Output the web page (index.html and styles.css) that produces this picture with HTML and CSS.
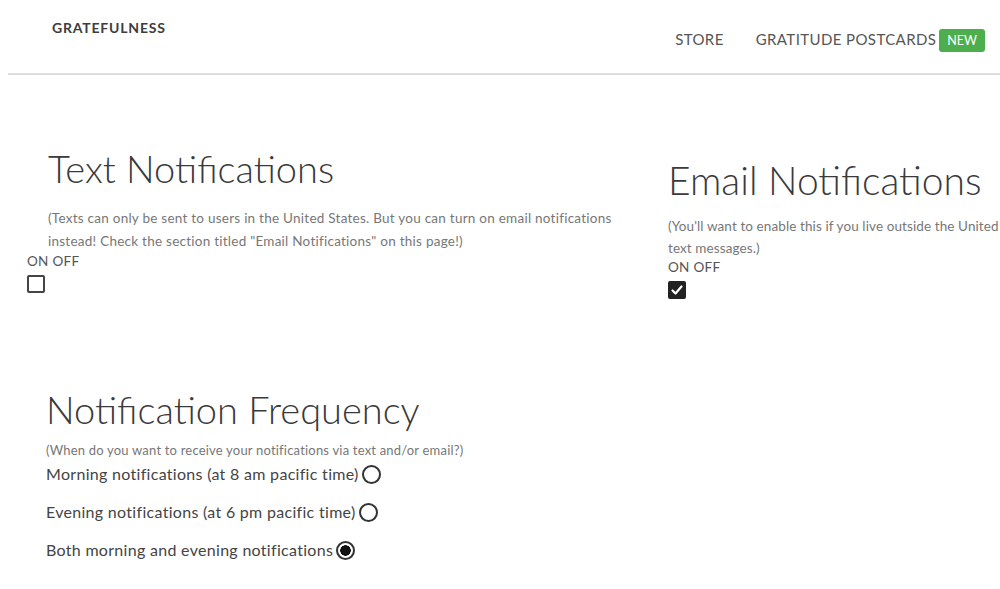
FILE: index.html
```html
<!DOCTYPE html>
<html lang="en">
<head>
  <meta charset="UTF-8" />
  <title>Notification Settings</title>
  <link rel="stylesheet" href="styles.css">
</head>
<body>
  <div class="topbar">
    <div class="logo">GRATEFULNESS</div>
    <nav class="nav">
      <a href="#">STORE</a>
      <a href="#">GRATITUDE POSTCARDS <span class="badge">NEW</span></a>
    </nav>
  </div>

  <div class="settings">
    <section class="panel panel-text">
      <h2>Text Notifications</h2>
      <p class="hint">(Texts can only be sent to users in the United States. But you can turn on email notifications instead! Check the section titled "Email Notifications" on this page!)</p>
      <div class="toggle">
        <span>ON OFF</span>
        <label class="box"></label>
      </div>
    </section>

    <section class="panel panel-email">
      <h2>Email Notifications</h2>
      <p class="hint">(You'll want to enable this if you live outside the United<br>text messages.)</p>
      <div class="toggle">
        <span>ON OFF</span>
        <label class="box checked">
          <svg viewBox="0 0 18 18" width="18" height="18"><path d="M4.5 9.5l3 3L13.5 5.5" fill="none" stroke="#fff" stroke-width="2.2" stroke-linecap="round" stroke-linejoin="round"/></svg>
        </label>
      </div>
    </section>
  </div>

  <section class="frequency">
    <h2>Notification Frequency</h2>
    <p class="hint">(When do you want to receive your notifications via text and/or email?)</p>
    <div class="options">
      <label class="option">Morning notifications (at 8 am pacific time)<span class="radio"></span></label>
      <label class="option">Evening notifications (at 6 pm pacific time)<span class="radio"></span></label>
      <label class="option">Both morning and evening notifications<span class="radio on"></span></label>
    </div>
  </section>
</body>
</html>
```

FILE: styles.css
```css
body {
  margin: 0;
  font-family: Lato, "Open Sans", sans-serif;
  color: #444;
  background: #fff;
  overflow: hidden;
}
.topbar {
  display: flex;
  justify-content: space-between;
  align-items: flex-start;
  height: 73px;
  margin-left: 8px;
  border-bottom: 2px solid #ddd;
}
.logo {
  margin: 19px 0 0 44px;
  font-size: 14px;
  font-weight: 700;
  letter-spacing: 0.8px;
  color: #3d3d3d;
}
.nav {
  display: flex;
  gap: 32px;
  margin: 25px 15px 0 0;
}
.nav a {
  color: #555;
  text-decoration: none;
  font-size: 15px;
  letter-spacing: 0.4px;
  display: flex;
  align-items: center;
  gap: 3px;
}
.badge {
  background: #4cae4c;
  color: #fff;
  font-size: 12.5px;
  letter-spacing: 0;
  padding: 4px 8px 4px;
  border-radius: 3px;
  margin-top: 4px;
}
.settings {
  display: grid;
  grid-template-columns: 668px 1fr;
  margin-top: 70px;
}
.panel h2 {
  font-weight: 300;
  font-size: 38px;
  margin: 0;
  color: #3a3a3a;
}
.hint {
  font-size: 13.5px;
  letter-spacing: 0.25px;
  color: #777;
  line-height: 23px;
  margin: 16px 0 0;
}
.panel-text {
  padding-left: 27px;
}
.panel-text h2,
.panel-text .hint {
  margin-left: 21px;
}
.panel-text .hint {
  width: 575px;
}
.panel-email {
  padding-top: 12px;
  white-space: nowrap;
}
.panel-email h2 {
  font-size: 39px;
}
.panel-email .hint {
  margin-top: 12px;
  line-height: 22px;
  letter-spacing: 0.1px;
}
.toggle span {
  display: block;
  font-size: 13.5px;
  letter-spacing: 0.3px;
  color: #555;
}
.box {
  display: block;
  width: 14px;
  height: 14px;
  border: 2px solid #444;
  border-radius: 2px;
  margin-top: 6px;
}
.box.checked {
  background: #222;
  border-color: #222;
}
.box svg {
  display: block;
  margin: -2px;
}
.frequency {
  margin: 87px 0 0 46px;
}
.frequency h2 {
  font-weight: 300;
  font-size: 38px;
  margin: 0;
  color: #3a3a3a;
}
.frequency .hint {
  font-size: 13px;
  letter-spacing: 0.2px;
  margin: 9px 0 0;
  line-height: 18px;
}
.options {
  margin-top: 2px;
}
.option {
  display: flex;
  align-items: center;
  gap: 3px;
  font-size: 16px;
  letter-spacing: 0.3px;
  color: #444;
  height: 24px;
  margin-bottom: 14px;
}
.radio {
  width: 15px;
  height: 15px;
  border: 2px solid #333;
  border-radius: 50%;
  margin-top: 3px;
}
.radio.on {
  background: radial-gradient(circle, #111 5px, #fff 5.5px);
}
```
